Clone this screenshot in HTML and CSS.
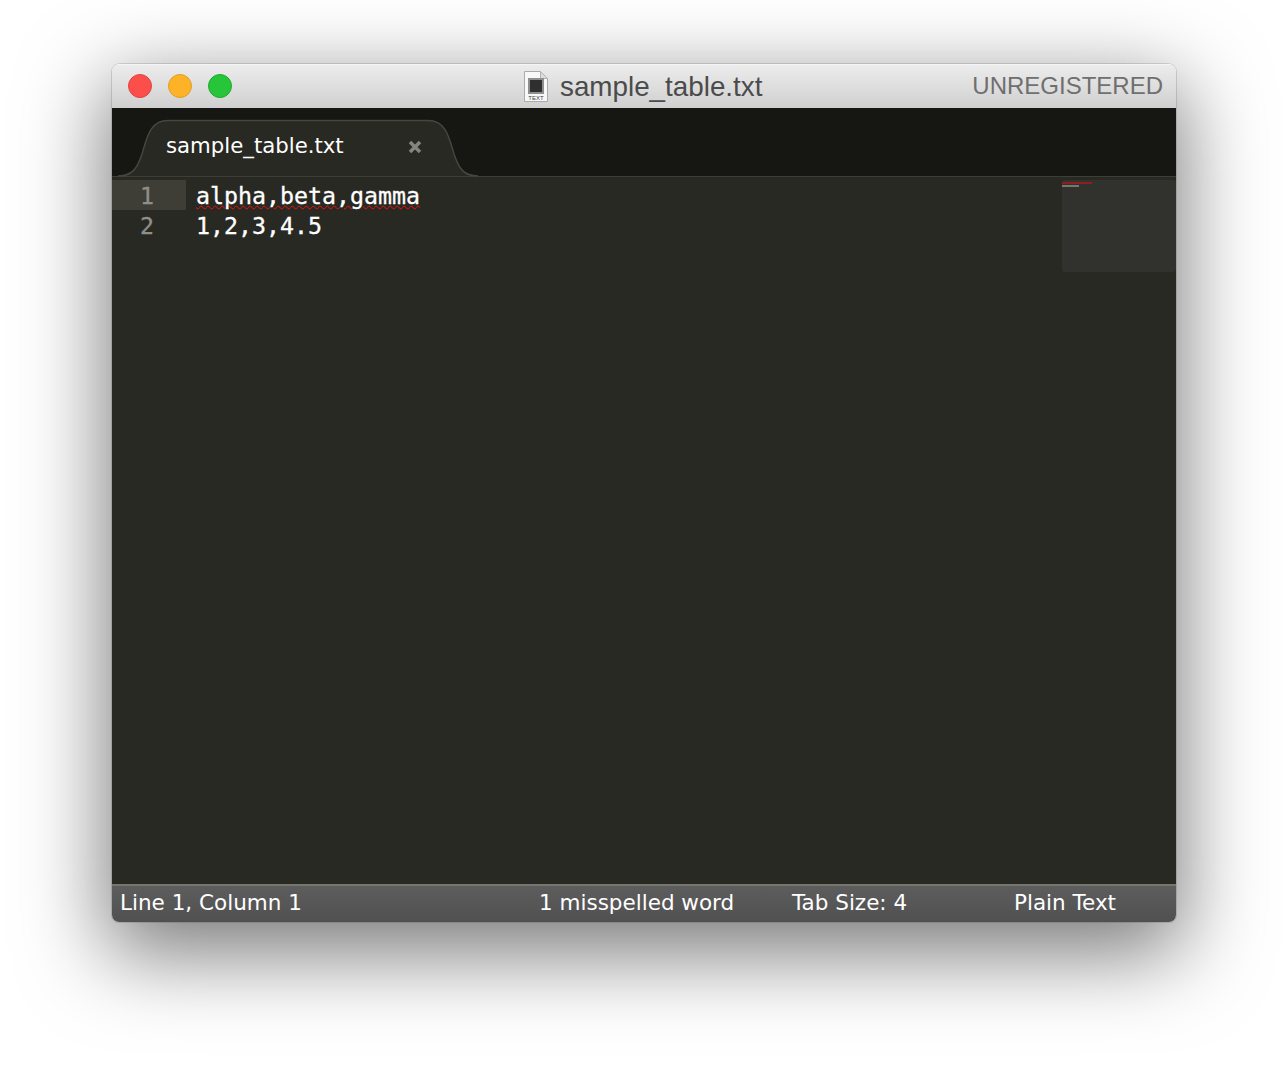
FILE: index.html
```html
<!DOCTYPE html>
<html lang="en">
<head>
<meta charset="utf-8">
<title>sample_table.txt</title>
<link rel="stylesheet" href="styles.css">
</head>
<body>
<div class="window">
  <header class="titlebar">
    <div class="lights">
      <span class="light red"></span>
      <span class="light yellow"></span>
      <span class="light green"></span>
    </div>
    <div class="title">
      <svg class="file-icon" width="26" height="32" viewBox="0 0 26 32">
        <path d="M1.500 0.500H17.500L24.500 7.500V30.500H1.500Z" fill="#f8f8f8" stroke="#ababab"/>
        <path d="M17.500 0.500V7.500H24.500Z" fill="#dcdcdc" stroke="#b4b4b4"/>
        <rect x="5" y="7" width="16" height="16" fill="#8e8e8e"/>
        <rect x="7" y="9" width="12" height="12" fill="#2f2f2f"/>
        <text x="13" y="28.500" class="icon-text">TEXT</text>
      </svg>
      <span class="title-name">sample_table.txt</span>
    </div>
    <span class="unreg">UNREGISTERED</span>
  </header>
  <nav class="tabbar">
    <div class="tab">
      <svg class="tab-shape" width="360" height="58" viewBox="0 0 360 58">
        <path d="M0 57C14 57 19 50 24 35C29 18 32 1.500 50 1.500H310C328 1.500 331 18 336 35C341 50 346 57 360 57Z" fill="#292924"/>
        <path d="M0 57C14 57 19 50 24 35C29 18 32 1.500 50 1.500H310C328 1.500 331 18 336 35C341 50 346 57 360 57" fill="none" stroke="#46463f" stroke-width="1.500"/>
      </svg>
      <span class="tab-name">sample_table.txt</span>
      <svg class="tab-close" width="16" height="16" viewBox="0 0 16 16">
        <path d="M3 3L13 13M13 3L3 13" stroke="#85857f" stroke-width="3.500"/>
      </svg>
    </div>
  </nav>
  <main class="editor">
    <div class="gutter">
      <div class="ln current">1</div>
      <div class="ln">2</div>
    </div>
    <div class="code">
      <div class="line"><span class="misspelled">alpha,beta,gamma</span></div>
      <div class="line">1,2,3,4.5</div>
    </div>
    <aside class="minimap">
      <div class="mini-line mini-bad"></div>
      <div class="mini-line mini-ok"></div>
    </aside>
  </main>
  <footer class="statusbar">
    <span class="st-pos">Line 1, Column 1</span>
    <span class="st-spell">1 misspelled word</span>
    <span class="st-tab">Tab Size: 4</span>
    <span class="st-syntax">Plain Text</span>
  </footer>
</div>
</body>
</html>
```
FILE: styles.css
```css
html, body { margin: 0; height: 100%; background: #fff; overflow: hidden; }
body { padding: 64px 112px 0; box-sizing: border-box; }

.window {
  width: 1064px;
  height: 858px;
  display: flex;
  flex-direction: column;
  border-radius: 8px 8px 7px 7px;
  overflow: hidden;
  box-shadow: 0 0 0 1px rgba(0,0,0,.12), 0 26px 84px 6px rgba(0,0,0,.52);
}

.titlebar {
  height: 44px;
  flex: none;
  display: flex;
  align-items: center;
  position: relative;
  background: linear-gradient(#ececec, #d0d0d0);
  box-sizing: border-box;
  border-top: 1px solid #f5f5f5;
  padding-bottom: 2px;
}
.lights { display: flex; gap: 16px; padding-left: 16px; }
.light { width: 22px; height: 22px; border-radius: 50%; border: 1px solid; }
.red { background: #fc4f4c; border-color: #e0443e; }
.yellow { background: #fdb228; border-color: #de9f26; }
.green { background: #27c53a; border-color: #1eab2c; }

.title {
  position: absolute;
  left: 411px;
  top: 5px;
  display: flex;
  align-items: center;
  gap: 11px;
}
.file-icon { display: block; }
.icon-text { font: 6px "Liberation Sans", sans-serif; text-anchor: middle; fill: #444; }
.title-name { font: 27.8px/34px "Liberation Sans", Arial, sans-serif; color: #4b4b4b; }
.unreg {
  margin-left: auto;
  padding-right: 13px;
  font: 24px/34px "Liberation Sans", Arial, sans-serif;
  color: #6f6f6f;
}

.tabbar {
  height: 69px;
  flex: none;
  box-sizing: border-box;
  background: #161612;
  border-bottom: 1px solid #3e3e39;
  padding: 11px 0 0 6px;
}
.tab {
  width: 360px;
  height: 58px;
  position: relative;
  margin-bottom: -1px;
}
.tab-shape { position: absolute; left: 0; top: 0; }
.tab-name {
  position: absolute;
  left: 48px;
  top: 11px;
  font: 21.25px/32px "DejaVu Sans", sans-serif;
  color: #fff;
}
.tab-close { position: absolute; left: 289px; top: 20px; }

.editor {
  flex: 1;
  display: flex;
  background: #292924;
  position: relative;
  padding-top: 3px;
  font: 23.25px/32px "DejaVu Sans Mono", monospace;
  -webkit-text-stroke: .3px currentColor;
}
.gutter { width: 74px; flex: none; color: #8f8f89; }
.ln { height: 30px; text-align: right; padding-right: 32px; }
.ln.current { background: #3e3e36; }
.code { padding-left: 10px; color: #fff; flex: 1; }
.line { height: 30px; white-space: pre; }
.misspelled { text-decoration: underline wavy #f01010 1px; text-underline-offset: 1px; }

.minimap {
  position: absolute;
  right: 0;
  top: 3px;
  width: 114px;
  height: 92px;
  background: #31312d;
  border-radius: 3px;
}
.mini-line { position: absolute; left: 0; height: 2px; }
.mini-bad { top: 2px; width: 30px; background: #8c1f1f; }
.mini-ok { top: 5px; width: 17px; background: #77776f; }

.statusbar {
  height: 38px;
  flex: none;
  position: relative;
  box-sizing: border-box;
  border-top: 2px solid #75756f;
  background: linear-gradient(#5d5d5d, #505050);
  color: #fff;
  font: 21.5px/34px "DejaVu Sans", sans-serif;
}
.statusbar span { position: absolute; top: 0; white-space: nowrap; }
.st-pos { left: 8px; }
.st-spell { left: 427px; }
.st-tab { left: 680px; }
.st-syntax { left: 902px; }
```
